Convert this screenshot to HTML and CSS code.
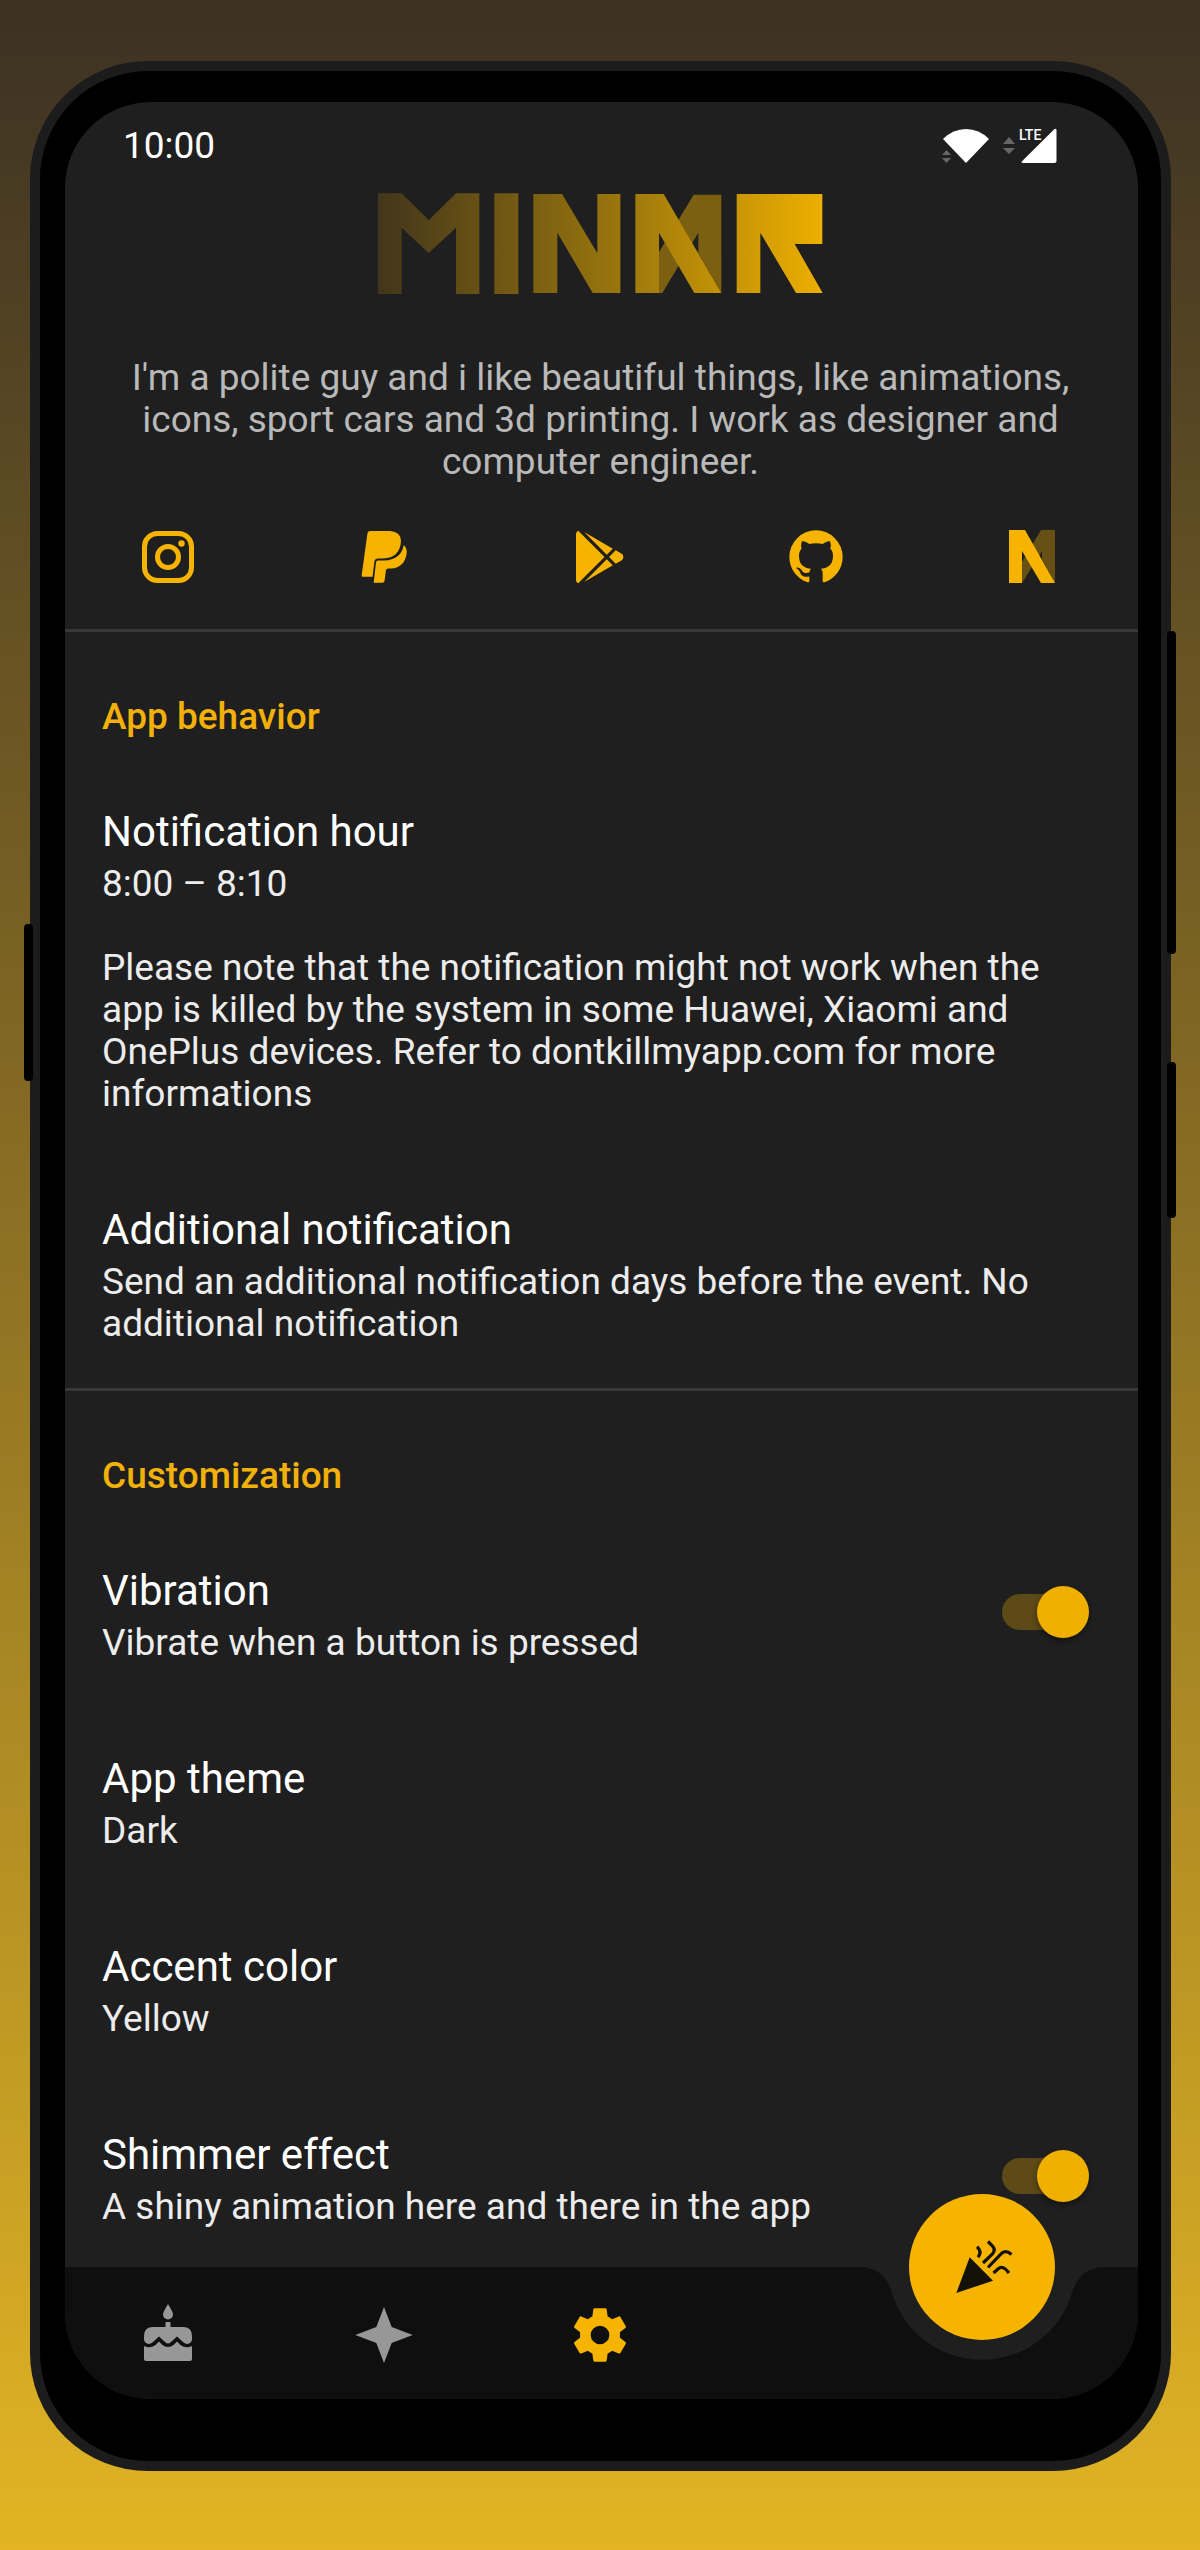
FILE: index.html
```html
<!DOCTYPE html>
<html lang="en">
<head>
<meta charset="utf-8">
<meta name="viewport" content="width=device-width, initial-scale=1">
<title>Minar – Settings</title>
<link rel="stylesheet" href="styles.css">
</head>
<body>
<div class="phone">
  <span class="key key-left"></span>
  <span class="key key-volume"></span>
  <span class="key key-power"></span>
  <div class="screen">
    <header class="status">
      <span class="clock">10:00</span>
      <div class="signals">
        <svg class="wifi" width="48" height="36" viewBox="0 0 48 36" aria-label="Wi-Fi">
          <path fill="#fff" d="M24 35 1 11Q11 1 24 1T47 11Z"/>
          <path fill="#666" d="M0 27h9l-4.500-5zM0 30h9l-4.500 5z"/>
        </svg>
        <svg class="arrows" width="12" height="36" viewBox="0 0 12 36" aria-hidden="true">
          <path fill="#666" d="M0 16h12l-6-7zM0 20h12l-6 6z"/>
        </svg>
        <div class="cell">
          <span class="lte">LTE</span>
          <svg width="36" height="36" viewBox="0 0 36 36" aria-hidden="true">
            <path fill="#fff" d="M33 1.500Q35 0 35.500 2V33Q35.500 35 33.500 35H1.500Q0 34.500 1 33.200Z"/>
          </svg>
        </div>
      </div>
    </header>

    <div class="intro">
      <svg class="logo" width="448" height="104" viewBox="50 36 1344 312" role="img" aria-label="Minar">
        <defs>
          <linearGradient id="gold" gradientUnits="userSpaceOnUse" x1="53" y1="0" x2="1387" y2="0">
            <stop offset="0" stop-color="#42361b"/>
            <stop offset="0.500" stop-color="#93710e"/>
            <stop offset="1" stop-color="#ecae00"/>
          </linearGradient>
        </defs>
        <g fill="url(#gold)">
          <path d="M53 40H124L205 121 287 40H357V342H287V143L205 219 124 143V342H53Z"/>
          <path d="M402 40H474V342H402Z"/>
          <path d="M519 42H605L711 220V42H780V339H697L591 158V339H519Z"/>
          <path fill="#7c6011" d="M1083 44H1000L894 220V339H906L1014 158V220L1083 339Z"/>
          <path d="M825 42H910L1083 339H1002L896 158V339H825Z"/>
          <path d="M1129 42H1386V192H1303L1387 339H1307L1200 158V339H1129Z"/>
        </g>
      </svg>
      <p class="bio">I'm a polite guy and i like beautiful things, like animations, icons, sport cars and 3d printing. I work as designer and computer engineer.</p>
    </div>

    <nav class="social" aria-label="Links">
      <a href="#instagram" aria-label="Instagram"><svg viewBox="0 0 64 64">
        <g fill="none" stroke="currentColor" stroke-width="5"><rect x="8.500" y="8.500" width="47" height="47" rx="13"/><circle cx="32" cy="32" r="10.500"/></g><circle cx="45.500" cy="18.500" r="3.200" fill="currentColor"/></svg></a>
      <a href="#paypal" aria-label="PayPal"><svg viewBox="0 0 64 64" fill="currentColor">
        <path d="M18.500 6H38Q49 7 49 16 48 33 31 33.500H26Q23 33.500 22.500 36L20.500 51.700H10.500Q9.500 51.700 9.700 50L15.500 8Q16 6 18.500 6ZM51.800 20Q55 23 54.700 28 53 42 40 43.500H36Q34.500 43.500 34 45L32.500 56Q32 57.700 30.500 57.700H21.700L24 37.500Q24.300 35.500 26 35.500H32Q49 35 51.800 20Z"/></svg></a>
      <a href="#play" aria-label="Google Play"><svg viewBox="0 0 24 24" fill="currentColor">
        <path d="M3 20.500V3.500C3 2.910 3.340 2.390 3.840 2.150L13.690 12 3.840 21.850C3.340 21.600 3 21.090 3 20.500M16.810 15.120 6.050 21.340 14.540 12.850 16.810 15.120M20.160 10.810C20.500 11.080 20.750 11.500 20.750 12S20.530 12.900 20.180 13.180L17.890 14.500 15.390 12 17.890 9.500 20.160 10.810M6.050 2.660 16.810 8.880 14.540 11.150 6.050 2.660Z"/></svg></a>
      <a href="#github" aria-label="GitHub"><svg viewBox="0 0 24 24" fill="currentColor">
        <path d="M12 2A10 10 0 0 0 2 12C2 16.420 4.870 20.170 8.840 21.500 9.340 21.580 9.500 21.270 9.500 21V19.310C6.730 19.910 6.140 17.970 6.140 17.970 5.680 16.810 5.030 16.500 5.030 16.500 4.120 15.880 5.100 15.900 5.100 15.900 6.100 15.970 6.630 16.930 6.630 16.930 7.500 18.450 8.970 18 9.540 17.760 9.630 17.110 9.890 16.670 10.170 16.420 7.950 16.170 5.620 15.310 5.620 11.500 5.620 10.390 6 9.500 6.650 8.790 6.550 8.540 6.200 7.500 6.750 6.150 6.750 6.150 7.590 5.880 9.500 7.170 10.290 6.950 11.150 6.840 12 6.840S13.710 6.950 14.500 7.170C16.410 5.880 17.250 6.150 17.250 6.150 17.800 7.500 17.450 8.540 17.350 8.790 18 9.500 18.380 10.390 18.380 11.500 18.380 15.320 16.040 16.160 13.810 16.410 14.170 16.720 14.500 17.330 14.500 18.260V21C14.500 21.270 14.660 21.590 15.170 21.500 19.140 20.160 22 16.420 22 12A10 10 0 0 0 12 2Z"/></svg></a>
      <a href="#website" aria-label="Website"><svg viewBox="0 0 64 64">
        <path fill="#675013" d="M55 5H41L22 37V58L42 26V34L55 58Z"/><path fill="currentColor" d="M9 5H25L55 58H41L22 26V58H9Z"/></svg></a>
    </nav>

    <main>
      <section class="group">
        <h2>App behavior</h2>
        <div class="pref">
          <div class="pref-text">
            <h3>Notification hour</h3>
            <p>8:00 – 8:10</p>
            <p class="note">Please note that the notification might not work when the app is killed by the system in some Huawei, Xiaomi and OnePlus devices. Refer to dontkillmyapp.com for more informations</p>
          </div>
        </div>
        <div class="pref">
          <div class="pref-text">
            <h3>Additional notification</h3>
            <p>Send an additional notification days before the event. No additional notification</p>
          </div>
        </div>
      </section>

      <section class="group">
        <h2>Customization</h2>
        <div class="pref">
          <label class="pref-text" for="vibration">
            <span class="title">Vibration</span>
            <span class="sub">Vibrate when a button is pressed</span>
          </label>
          <input class="switch" type="checkbox" role="switch" id="vibration" checked>
        </div>
        <div class="pref">
          <div class="pref-text">
            <h3>App theme</h3>
            <p>Dark</p>
          </div>
        </div>
        <div class="pref">
          <div class="pref-text">
            <h3>Accent color</h3>
            <p>Yellow</p>
          </div>
        </div>
        <div class="pref">
          <label class="pref-text" for="shimmer">
            <span class="title">Shimmer effect</span>
            <span class="sub">A shiny animation here and there in the app</span>
          </label>
          <input class="switch" type="checkbox" role="switch" id="shimmer" checked>
        </div>
      </section>
    </main>

    <nav class="bar" aria-label="Main">
      <div class="tabs">
        <a class="tab" href="#birthdays" aria-label="Birthdays"><svg viewBox="0 0 64 64" fill="currentColor">
          <path d="M32 1Q37 9 37 11.500A5 5 0 0 1 27 11.500Q27 9 32 1ZM29.500 19H34.500V24H47Q56 24 56 33V36Q56 40 51.500 41Q49 41 47 39L41 33.500 35 39Q32 42 29 39L23 33.500 17 39Q15 41 12.500 41Q8 40 8 36V33Q8 24 17 24H29.500ZM8 43Q14 46 19.500 42L23 38.500 26.500 42Q32 46 37.500 42L41 38.500 44.500 42Q50 46 56 43V56Q56 58 54 58H10Q8 58 8 56Z"/></svg></a>
        <a class="tab" href="#favorites" aria-label="Favorites"><svg viewBox="0 0 64 64" fill="currentColor">
          <path d="M32 4 39.700 24 60.700 32 39.700 40 32 60 24.300 40 3.300 32 24.300 24Z"/></svg></a>
        <a class="tab active" href="#settings" aria-label="Settings" aria-current="page"><svg viewBox="0 0 24 24" fill="currentColor">
          <path d="M12 15.500A3.500 3.500 0 0 1 8.500 12 3.500 3.500 0 0 1 12 8.500 3.500 3.500 0 0 1 15.500 12 3.500 3.500 0 0 1 12 15.500M19.430 12.970C19.470 12.650 19.500 12.330 19.500 12S19.470 11.340 19.430 11L21.540 9.370C21.730 9.220 21.780 8.950 21.660 8.730L19.660 5.270C19.540 5.050 19.270 4.960 19.050 5.050L16.560 6.050C16.040 5.660 15.500 5.320 14.870 5.070L14.500 2.420C14.460 2.180 14.250 2 14 2H10C9.750 2 9.540 2.180 9.500 2.420L9.130 5.070C8.500 5.320 7.960 5.660 7.440 6.050L4.950 5.050C4.730 4.960 4.460 5.050 4.340 5.270L2.340 8.730C2.210 8.950 2.270 9.220 2.460 9.370L4.570 11C4.530 11.340 4.500 11.670 4.500 12S4.530 12.650 4.570 12.970L2.460 14.630C2.270 14.780 2.210 15.050 2.340 15.270L4.340 18.730C4.460 18.950 4.730 19.030 4.950 18.950L7.440 17.940C7.960 18.340 8.500 18.680 9.130 18.930L9.500 21.580C9.540 21.820 9.750 22 10 22H14C14.250 22 14.460 21.820 14.500 21.580L14.870 18.930C15.500 18.670 16.040 18.340 16.560 17.940L19.050 18.950C19.270 19.030 19.540 18.950 19.660 18.730L21.660 15.270C21.780 15.050 21.730 14.780 21.540 14.630L19.430 12.970Z"/></svg></a>
      </div>
      <div class="notch">
        <svg width="244" height="132" viewBox="0 0 244 132" aria-hidden="true">
          <path fill="#0f0f0f" d="M0 0C17 0 27 10 32 26A94 94 0 0 0 212 26C217 10 227 0 244 0V132H0Z"/>
        </svg>
        <button class="fab" type="button" aria-label="Celebrate"><svg viewBox="0 0 64 64">
          <path fill="#141208" d="M19.700 22.300 43 45.700 6.300 58Z"/>
          <path fill="none" stroke="#141208" stroke-width="3.200" d="M27 11.700Q32.500 16.500 28 22.300M38 6.500 42.500 11Q46 15 42.500 18.800L33 28M38 32.500 52 18Q56 14.500 61.500 19.500M43.500 38 48 34Q53 29.500 59 38"/></svg></button>
      </div>
      <div class="bar-end"></div>
    </nav>
  </div>
</div>
</body>
</html>
```
FILE: styles.css
```css
* {
  box-sizing: border-box;
}

body {
  min-height: 100vh;
  margin: 0;
  padding: 61px 29px 79px 30px;
  background: linear-gradient(#3c3123, #e2b424) no-repeat;
  font-family: Roboto, "Liberation Sans", sans-serif;
  font-size: 37px;
  line-height: 42px;
  color: #ececec;
}

h2, h3, p {
  margin: 0;
}

svg {
  display: block;
}

.phone {
  position: relative;
  padding: 31px 23px 62px 25px;
  border: 10px solid #1c1c1c;
  border-radius: 118px;
  background: #000;
}

.key {
  position: absolute;
  width: 9px;
  border-radius: 4px;
  background: #000;
}

.key-left {
  left: -16px;
  top: 853px;
  height: 157px;
}

.key-volume {
  right: -15px;
  top: 560px;
  height: 323px;
}

.key-power {
  right: -15px;
  top: 991px;
  height: 156px;
}

.screen {
  display: flex;
  flex-direction: column;
  overflow: hidden;
  border-radius: 86px;
  background: #1f1f1f;
}

.status {
  display: flex;
  justify-content: space-between;
  align-items: center;
  padding: 23px 81px 0 58px;
  color: #fff;
}

.signals {
  display: flex;
}

.arrows {
  margin: 0 6px 0 13px;
}

.cell {
  position: relative;
}

.lte {
  position: absolute;
  left: -2px;
  top: -1px;
  font-size: 14px;
  font-weight: 500;
  line-height: 16px;
}

.intro {
  display: flex;
  flex-direction: column;
  align-items: center;
  gap: 61px;
  padding: 25px 50px 0 48px;
}

.bio {
  text-align: center;
  color: #b9b9b9;
}

.social {
  display: flex;
  justify-content: space-between;
  padding: 42px 74px 40px 71px;
}

.social a {
  width: 64px;
  height: 64px;
  color: #f6b400;
}

.group {
  border-top: 3px solid #383838;
}

.group + .group {
  margin-top: -2px;
}

.group h2 {
  padding: 64px 37px 24px;
  font-size: 37px;
  font-weight: 500;
  color: #f2b10a;
}

.pref {
  display: flex;
  align-items: center;
  justify-content: space-between;
  padding: 45px 49px 45px 37px;
}

.pref-text {
  display: flex;
  flex-direction: column;
  gap: 6px;
}

.pref h3,
.title {
  font-size: 42px;
  font-weight: 400;
  line-height: 50px;
  color: #fff;
}

.note {
  padding-top: 36px;
}

.switch {
  position: relative;
  appearance: none;
  display: flex;
  align-items: center;
  flex: none;
  width: 87px;
  height: 52px;
  margin: 0 0 6px;
}

.switch::before {
  content: "";
  position: absolute;
  inset: 8px 7px 8px 0;
  border-radius: 18px;
  background: #5e4a17;
}

.switch::after {
  content: "";
  position: relative;
  width: 52px;
  height: 52px;
  margin-left: auto;
  border-radius: 50%;
  background: #f0b000;
  box-shadow: 0 3px 6px rgba(0, 0, 0, 0.4);
}

.bar {
  position: relative;
  display: flex;
  height: 132px;
  margin-top: -6px;
}

.tabs {
  display: flex;
  flex: 1;
  align-items: center;
  gap: 152px;
  padding: 4px 0 0 71px;
  background: #0f0f0f;
}

.tab {
  width: 64px;
  height: 64px;
  color: #979797;
}

.tab.active {
  color: #f6b400;
}

.notch {
  position: relative;
}

.bar-end {
  width: 34px;
  background: #0f0f0f;
}

.fab {
  position: absolute;
  left: 49px;
  top: -73px;
  width: 146px;
  height: 146px;
  padding: 41px;
  border: 0;
  border-radius: 50%;
  background: #f6b400;
}
```
